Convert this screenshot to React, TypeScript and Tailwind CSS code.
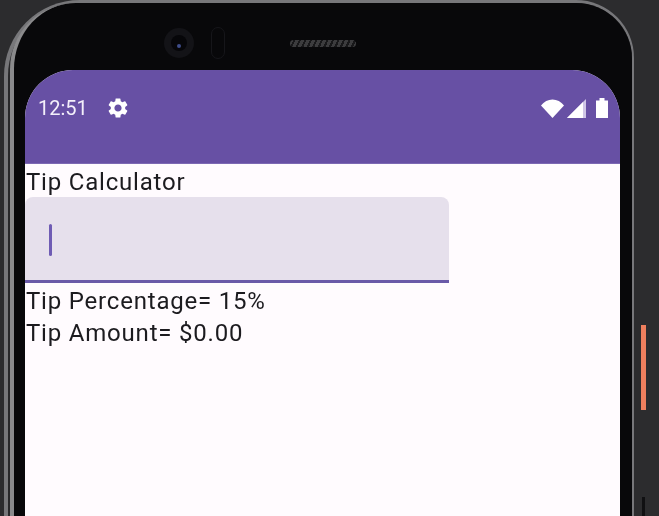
import { MdSettings } from 'react-icons/md';

function StatusBar() {
  return (
    <div className="h-[94px] bg-[#6750a4] border-b border-b-[#7c68b3] pt-[27px] pl-[13px] pr-[12px] text-white">
      <div className="flex items-center h-[22px]">
        <span className="text-[20px] leading-[22px] text-[#f3effa] w-[68px]">12:51</span>
        <MdSettings size={24} className="text-white" />
        <div className="flex items-center ml-auto">
          {/* wifi */}
          <svg width="23" height="19" viewBox="0 0 23 19" className="mr-[3px]">
            <path d="M0 6.5C3 2.5 7 .5 11.5 .5S20 2.5 23 6.5L11.5 19Z" fill="#fff" />
          </svg>
          {/* signal */}
          <svg width="19" height="19" viewBox="0 0 19 19" className="mr-[10px]">
            <path d="M0 19L19 0V19Z" fill="#cfc6e6" />
            <path d="M0 19L16 3V19Z" fill="#fff" />
          </svg>
          {/* battery */}
          <svg width="12" height="20" viewBox="0 0 12 20">
            <path d="M3.5 0H8.5V2.5H12V20H0V2.5H3.5Z" fill="#fff" />
          </svg>
        </div>
      </div>
    </div>
  );
}

function Bezel() {
  return (
    <div className="h-[67px] flex items-center pt-[13px]">
      {/* front camera */}
      <div className="ml-[139px] w-[30px] h-[30px] rounded-full bg-[#131317] flex items-center justify-center">
        <div className="w-[16px] h-[16px] rounded-full bg-[#060609] flex items-end justify-center pb-[3px]">
          <div className="w-[4px] h-[4px] rounded-full bg-[#3f4d8a]" />
        </div>
      </div>
      <div className="ml-[17px] w-[14px] h-[32px] rounded-full border border-[#16161a]" />
      {/* speaker */}
      <div className="ml-[65px] w-[66px] h-[7px] rounded-full bg-[repeating-linear-gradient(115deg,#3c3c3e_0px,#3c3c3e_3px,#18181a_3px,#18181a_5px)]" />
    </div>
  );
}

export default function App() {
  return (
    <div className="relative w-[659px] h-[516px] overflow-hidden bg-[#2c2c2e] blur-[0.4px] font-['Roboto',sans-serif]">
      <div className="ml-[4px] w-[630px] h-[620px] rounded-tl-[76px] rounded-tr-[58px] border-l-4 border-t-[3px] border-r-2 border-[#77777a] bg-[#28282a] pl-[2px]">
        <div className="h-full rounded-tl-[66px] rounded-tr-[56px] border-l-4 border-[#8a8a8c] bg-[#08080a] pl-[11px] pr-[12px]">
          <Bezel />
          <div className="h-[540px] rounded-t-[48px] overflow-hidden bg-[#fffbfe]">
            <StatusBar />
            <div className="text-[#1c1b1f] text-[24px] leading-[32px] tracking-[0.8px]">
              <div className="h-[33px] pl-px pt-[2px]">Tip Calculator</div>
              <div className="w-[424px] h-[86px] rounded-t-[8px] bg-[#e6e0ec] border-b-[3px] border-[#6a5aa8] flex items-center pl-[24px]">
                <div className="w-[3px] h-[32px] mt-[2px] rounded-full bg-[#6f5cb4]" />
              </div>
              <div className="pl-px pt-[2px]">Tip Percentage= 15%</div>
              <div className="pl-px">Tip Amount= $0.00</div>
            </div>
          </div>
        </div>
      </div>
      {/* side buttons */}
      <div className="absolute left-[641px] top-[325px] w-[5px] h-[85px] bg-[#ee7f5e]" />
      <div className="absolute left-[642px] top-[497px] w-[3px] h-[19px] bg-[#101012]" />
    </div>
  );
}
